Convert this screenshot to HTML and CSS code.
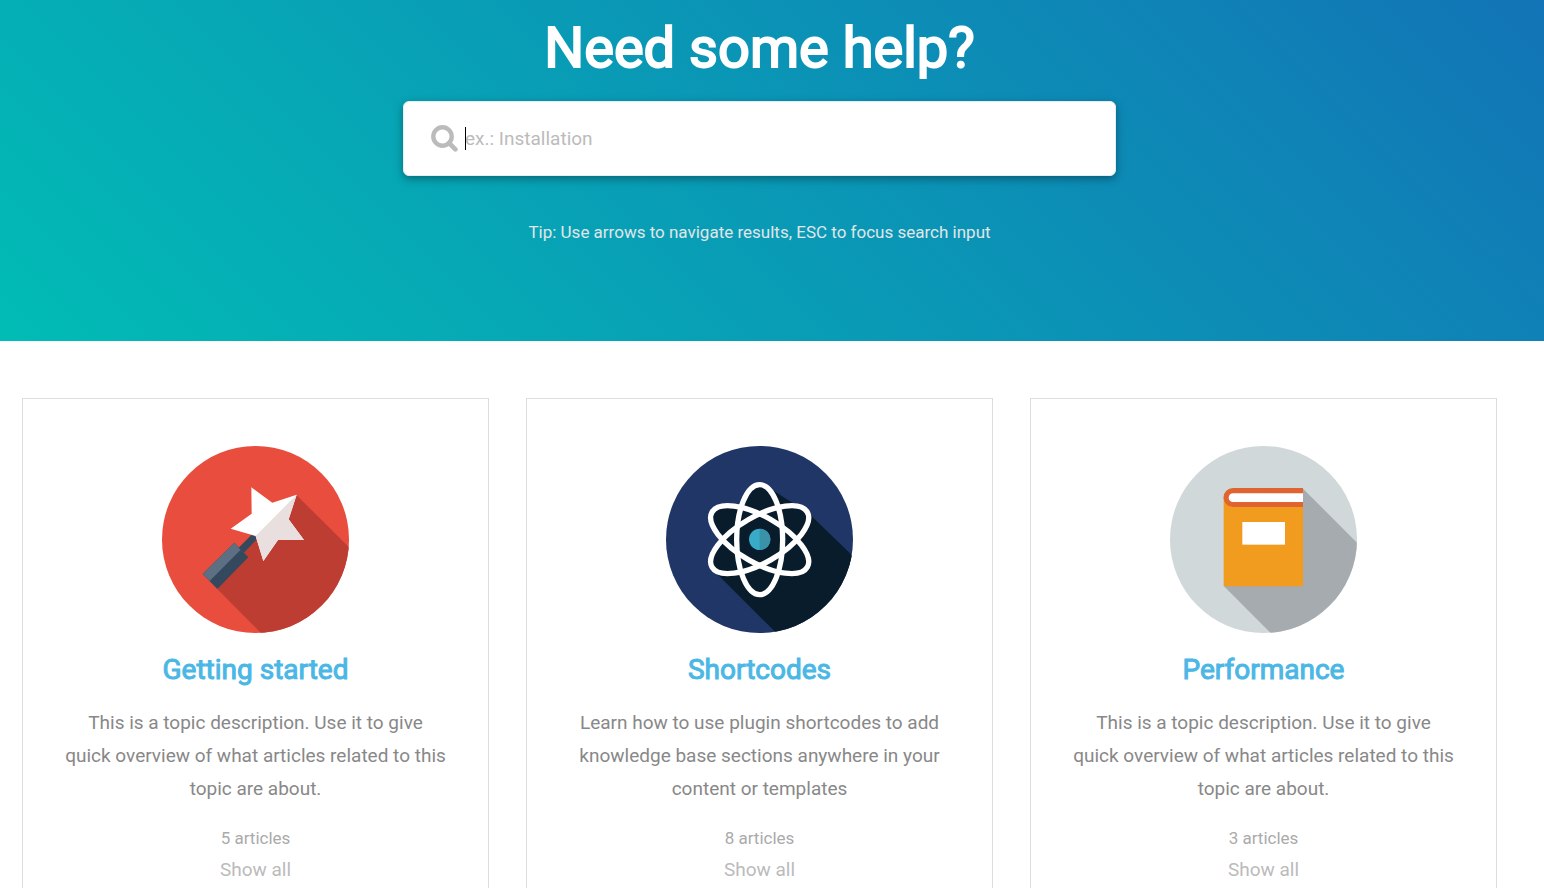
FILE: index.html
```html
<!DOCTYPE html>
<html lang="en">
<head>
    <meta charset="UTF-8">
    <meta name="viewport" content="width=device-width, initial-scale=1.0">
    <title>Need some help?</title>
    <link rel="stylesheet" href="styles.css">
</head>
<body>
    <header class="hero">
        <h1>Need some help?</h1>
        <form class="search" role="search">
            <label class="search-icon" for="search" aria-label="Search">
                <svg viewBox="0 0 27 27" width="27" height="27">
                    <circle cx="11.5" cy="11.5" r="9.2" fill="none" stroke="#bbb" stroke-width="4.4"/>
                    <path d="M18 18 L24.4 24.4" stroke="#bbb" stroke-width="4.6" stroke-linecap="round"/>
                </svg>
            </label>
            <div class="search-field">
                <span class="caret"></span>
                <input type="text" id="search" name="search" placeholder="ex.: Installation" autocomplete="off">
            </div>
        </form>
        <p class="tip">Tip: Use arrows to navigate results, ESC to focus search input</p>
    </header>

    <main class="topics">
        <section class="topic">
            <svg class="topic-icon" viewBox="36 33 561 561">
                <clipPath id="wandClip"><circle cx="316.5" cy="313.5" r="280.5"/></clipPath>
                <g clip-path="url(#wandClip)">
                    <rect x="36" y="33" width="561" height="561" fill="#e84d3d"/>
                    <path d="M439 180 L640 379 V640 H378 L202 462 L318 303 Z" fill="#bd3d32"/>
                </g>
                <path d="M158 417 L253 323 L295 367 L202 462 Z" fill="#34495e"/>
                <path d="M158 417 L253 323 L272 344 L179 438 Z" fill="#5d6f82"/>
                <path d="M266 338 L304 300 L322 304 L318 315 L282 353 Z" fill="#34495e"/>
                <path d="M304 157 L367 203 L440 179 L416 253 L462 315 L384 315 L340 378 L317 303 L242 281 L305 236 Z" fill="#fff"/>
                <path d="M440 179 L416 253 L462 315 L384 315 L340 378 L317 303 Z" fill="#e9dfde"/>
            </svg>
            <h2><a href="#getting-started">Getting started</a></h2>
            <p class="description">This is a topic description. Use it to give quick overview of what articles related to this topic are about.</p>
            <p class="count">5 articles</p>
            <a class="show-all" href="#getting-started">Show all</a>
        </section>

        <section class="topic">
            <svg class="topic-icon" viewBox="33 33 561 561">
                <clipPath id="atomClip"><circle cx="313.5" cy="313.5" r="280.5"/></clipPath>
                <g clip-path="url(#atomClip)">
                    <rect x="33" y="33" width="561" height="561" fill="#1f3667"/>
                    <path d="M357 168 L640 406 V640 H410 L180 410 L314 314 Z" fill="#081c2b"/>
                    <path d="M357 168 L460 234 L640 408 L314 314 Z" fill="#081c2b"/>
                </g>
                <g fill="#081c2b">
                    <ellipse cx="314" cy="314" rx="69" ry="165"/>
                    <ellipse cx="314" cy="314" rx="69" ry="165" transform="rotate(60 314 314)"/>
                    <ellipse cx="314" cy="314" rx="69" ry="165" transform="rotate(-60 314 314)"/>
                </g>
                <g fill="none" stroke="#fff" stroke-width="16">
                    <ellipse cx="314" cy="314" rx="69" ry="165"/>
                    <ellipse cx="314" cy="314" rx="69" ry="165" transform="rotate(60 314 314)"/>
                    <ellipse cx="314" cy="314" rx="69" ry="165" transform="rotate(-60 314 314)"/>
                </g>
                <circle cx="314" cy="313" r="32" fill="#37abc8"/>
                <path d="M314 281 A32 32 0 0 1 314 345 Z" fill="#3a92a8"/>
            </svg>
            <h2><a href="#shortcodes">Shortcodes</a></h2>
            <p class="description">Learn how to use plugin shortcodes to add knowledge base sections anywhere in your content or templates</p>
            <p class="count">8 articles</p>
            <a class="show-all" href="#shortcodes">Show all</a>
        </section>

        <section class="topic">
            <svg class="topic-icon" viewBox="30 33 561 561">
                <clipPath id="bookClip"><circle cx="310.5" cy="313.5" r="280.5"/></clipPath>
                <g clip-path="url(#bookClip)">
                    <rect x="30" y="33" width="561" height="561" fill="#d0d8da"/>
                    <path d="M429 161 L640 372 V640 H378 L192 454 Z" fill="#a5abae"/>
                </g>
                <path d="M191 188 H429 V454 H191 Z" fill="#f29c1f"/>
                <path d="M429 159 H219 A28 28 0 0 0 219 216 H429 Z" fill="#e0642f"/>
                <path d="M429 175 H219 A13 13 0 0 0 219 201 H429 Z" fill="#fff"/>
                <rect x="247" y="261" width="128" height="68" fill="#fff"/>
            </svg>
            <h2><a href="#performance">Performance</a></h2>
            <p class="description">This is a topic description. Use it to give quick overview of what articles related to this topic are about.</p>
            <p class="count">3 articles</p>
            <a class="show-all" href="#performance">Show all</a>
        </section>
    </main>
</body>
</html>
```
FILE: styles.css
```css
* {
    box-sizing: border-box;
}
body {
    margin: 0;
    font-family: Roboto, Arial, sans-serif;
    font-size: 19px;
    background: #fff;
    color: #888;
}
h1, h2, p {
    margin: 0;
    font-weight: 400;
}
a {
    color: inherit;
    text-decoration: none;
}
.hero {
    display: flex;
    flex-direction: column;
    align-items: center;
    padding: 13px 25px 93px 0;
    background: linear-gradient(45deg, #01bcb5, #1274b6);
}
.hero h1 {
    font-size: 56px;
    line-height: 70px;
    color: #fff;
    -webkit-text-stroke: 2px #fff;
}
.search {
    display: flex;
    align-items: center;
    gap: 7px;
    width: 100%;
    max-width: 713px;
    margin-top: 18px;
    padding: 0 27px;
    background: #fff;
    border: 1px solid #e4eef0;
    border-radius: 6px;
    box-shadow: 0 3px 8px rgba(0, 0, 0, 0.35);
}
.search-icon {
    display: flex;
}
.search-field {
    position: relative;
    flex: 1;
}
.search input {
    display: block;
    width: 100%;
    height: 73px;
    padding: 0;
    border: none;
    outline: none;
    background: transparent;
    font: inherit;
    color: #333;
    caret-color: transparent;
}
.search input::placeholder {
    color: #bbb;
    opacity: 1;
}
.caret {
    position: absolute;
    top: 25px;
    left: 0;
    width: 1px;
    height: 23px;
    background: #000;
}
.tip {
    margin-top: 40px;
    font-size: 17px;
    line-height: 32px;
    color: #e0e6e8;
}
.topics {
    display: grid;
    grid-template-columns: repeat(3, 1fr);
    gap: 37px;
    padding: 57px 47px 57px 22px;
}
.topic {
    display: flex;
    flex-direction: column;
    align-items: center;
    padding: 47px 41px;
    border: 1px solid #ddd;
    text-align: center;
}
.topic-icon {
    width: 187px;
    height: 187px;
}
.topic h2 {
    margin-top: 18px;
    font-size: 28px;
    line-height: 38px;
    color: #4bb7e5;
    -webkit-text-stroke: 1px #4bb7e5;
}
.description {
    margin-top: 17px;
    line-height: 33px;
}
.count {
    margin-top: 17px;
    font-size: 17px;
    line-height: 32px;
    color: #aaa;
}
.show-all {
    line-height: 32px;
    color: #bbb;
}
```
